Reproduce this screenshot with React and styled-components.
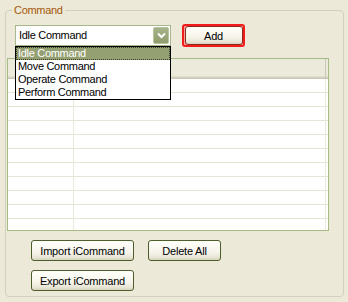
import React from "react";
import styled, { createGlobalStyle } from "styled-components";

const GlobalStyle = createGlobalStyle`
  html, body {
    margin: 0;
    padding: 0;
    background: #ece9d8;
  }
  body {
    font-family: "Liberation Sans", Arial, sans-serif;
    font-size: 11px;
    letter-spacing: -0.3px;
    color: #000;
  }
`;

const commands = ["Idle Command", "Move Command", "Operate Command", "Perform Command"];
const rows = Array.from({ length: 11 });

const App = () => {
  return (
    <Page>
      <GlobalStyle />
      <Group>
        <Legend>Command</Legend>
        <TopRow>
          <Combo>
            <ComboText>Idle Command</ComboText>
            <ArrowButton>
              <svg width="9" height="7" viewBox="0 0 9 7">
                <path d="M1 1.5 L4.5 5 L8 1.5" fill="none" stroke="#fff" strokeWidth="2" />
              </svg>
            </ArrowButton>
            <DropList>
              {commands.map((c, i) => (
                <DropItem key={c} selected={i === 0}>
                  {c}
                </DropItem>
              ))}
            </DropList>
          </Combo>
          <FocusRing>
            <XpButton wide={58}>Add</XpButton>
          </FocusRing>
        </TopRow>

        <ListView>
          <Header>
            <HeadCell width={65} />
            <HeadCell width={251} />
          </Header>
          {rows.map((_, i) => (
            <Row key={i}>
              <Cell width={65} />
              <Cell width={251} />
            </Row>
          ))}
        </ListView>

        <ButtonGrid>
          <XpButton wide={103}>Import iCommand</XpButton>
          <XpButton wide={73}>Delete All</XpButton>
          <XpButton wide={103}>Export iCommand</XpButton>
        </ButtonGrid>
      </Group>
    </Page>
  );
};

export default App;

const Page = styled.div`
  width: 348px;
  height: 302px;
  box-sizing: border-box;
  padding: 3px 4px 0 5px;
`;

const Group = styled.fieldset`
  margin: 0;
  padding: 0;
  width: 339px;
  height: 294px;
  box-sizing: border-box;
  border: 1px solid #d0d0bf;
  border-radius: 4px;
  min-width: 0;
`;

const Legend = styled.legend`
  margin-left: 6px;
  padding: 0 2px;
  color: #a5580b;
  font-size: 11px;
  line-height: 14px;
`;

const TopRow = styled.div`
  display: flex;
  align-items: center;
  gap: 11px;
  padding-left: 9px;
  margin-top: 7px;
`;

const Combo = styled.div`
  position: relative;
  width: 156px;
  height: 21px;
  box-sizing: border-box;
  border: 1px solid #a9b78f;
  background: #fff;
  display: flex;
  align-items: center;
  justify-content: space-between;
  padding: 0 1px 0 3px;
`;

const ComboText = styled.span`
  line-height: 13px;
`;

const ArrowButton = styled.div`
  width: 16px;
  height: 17px;
  box-sizing: border-box;
  border: 1px solid #b8c49c;
  border-radius: 2px;
  background: linear-gradient(#a6b389, #8f9c6c);
  display: flex;
  align-items: center;
  justify-content: center;
`;

const DropList = styled.div`
  position: absolute;
  left: -1px;
  top: 20px;
  width: 156px;
  box-sizing: border-box;
  border: 1px solid #000;
  background: #fff;
  z-index: 2;
`;

const DropItem = styled.div`
  height: 13px;
  line-height: 13px;
  padding-left: 2px;
  box-sizing: border-box;
  color: ${(p) => (p.selected ? "#fff" : "#000")};
  background: ${(p) => (p.selected ? "#94a072" : "transparent")};
  outline: ${(p) => (p.selected ? "1px dotted #3a3f2a" : "none")};
  outline-offset: -1px;
`;

const FocusRing = styled.div`
  width: 63px;
  height: 23px;
  box-sizing: border-box;
  border: 2px solid #f21c1c;
  border-radius: 3px;
  display: flex;
  align-items: center;
  justify-content: center;
  background: #f7a0a0;
`;

const XpButton = styled.button`
  width: ${(p) => p.wide}px;
  height: 21px;
  box-sizing: border-box;
  padding: 0;
  border: 1px solid #4d5d2c;
  border-radius: 3px;
  background: linear-gradient(#fffffb 0%, #f6f4ea 60%, #e9e6d7 85%, #d8d2bf 100%);
  font-family: "Liberation Sans", Arial, sans-serif;
  font-size: 11px;
  letter-spacing: -0.2px;
  color: #000;

  ${FocusRing} & {
    height: 19px;
    border-color: #8a2b1b;
  }
`;

const ListView = styled.div`
  margin: 11px 0 0 1px;
  width: 322px;
  height: 173px;
  box-sizing: border-box;
  border: 1px solid #a5bb86;
  background: #fff;
  overflow: hidden;
`;

const Header = styled.div`
  display: flex;
  height: 20px;
  background: #ebeadb;
  box-shadow: inset 0 -1px #cbc7b8, inset 0 -2px #d6d2c2, inset 0 -3px #e2decd;
`;

const HeadCell = styled.div`
  width: ${(p) => p.width}px;
  border-right: 1px solid #cbc7b8;
`;

const Row = styled.div`
  display: flex;
  height: 14px;
  box-sizing: border-box;
  border-bottom: 1px solid #e6e5d8;
`;

const Cell = styled.div`
  width: ${(p) => p.width}px;
  border-right: 1px solid #ebeadb;
`;

const ButtonGrid = styled.div`
  display: grid;
  grid-template-columns: 103px 73px;
  column-gap: 14px;
  row-gap: 9px;
  padding-left: 25px;
  margin-top: 9px;
`;
